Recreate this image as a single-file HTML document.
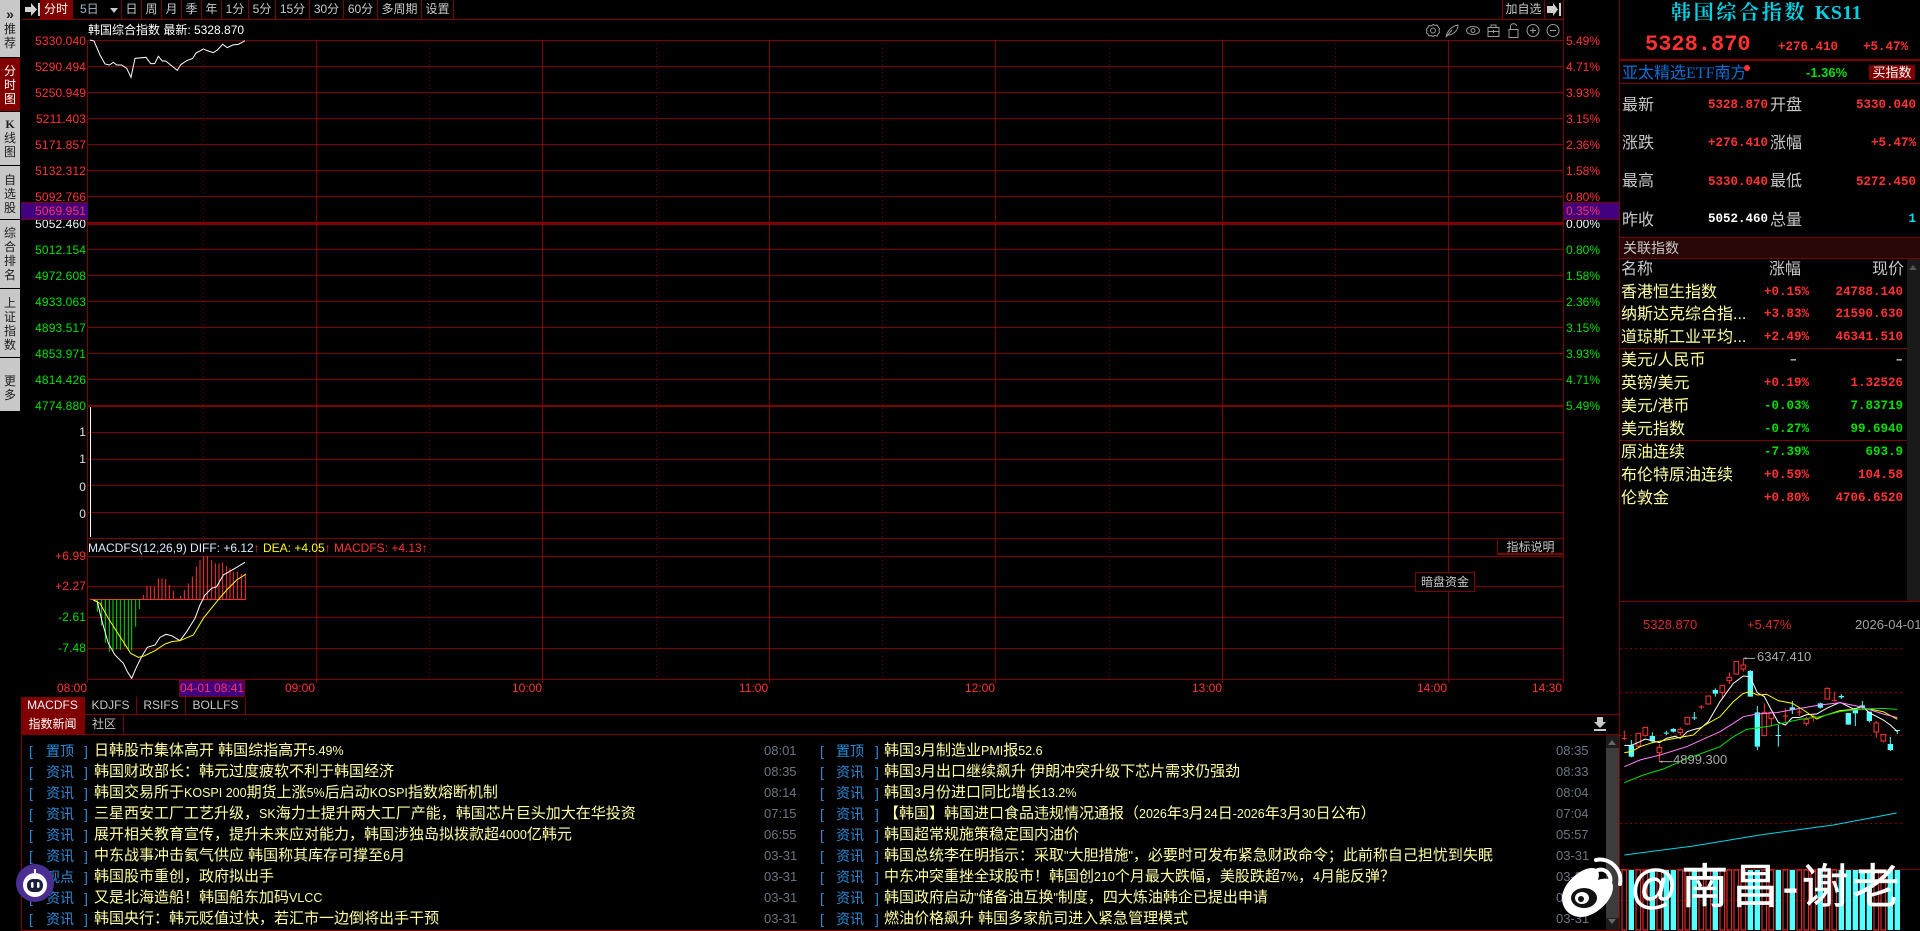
<!DOCTYPE html>
<html lang="zh"><head><meta charset="utf-8"><title>韩国综合指数</title>
<style>
*{margin:0;padding:0;box-sizing:border-box}
html,body{width:1920px;height:931px;background:#000;overflow:hidden}
body{position:relative;font-family:"Liberation Sans","WenQuanYi Zen Hei","Noto Sans CJK SC",sans-serif;font-size:12px;color:#c8c8c8}
.t{position:absolute;white-space:nowrap;line-height:16px;height:16px}
.ra{text-align:right}
.c{text-align:center}
svg{position:absolute;left:0;top:0}
.r{color:#ff3232}.g{color:#00e000}.w{color:#f0f8ff}.y{color:#ffff00}
.sb{position:absolute;left:0;width:20px;background:#c8c8c8;color:#202020;font-size:12px;line-height:14px;text-align:center}
.bx{position:absolute;top:0;height:19px;line-height:19px;text-align:center;border-right:1px solid #800000;color:#c8c8c8;font-size:12px}
.ax{position:absolute;left:20px;width:66px;text-align:right;line-height:14px;height:14px;font-size:12px;letter-spacing:.1px}
.ap{position:absolute;left:1566px;line-height:14px;height:14px;font-size:12px}
.m{font-family:"Liberation Mono","WenQuanYi Zen Hei",monospace;font-weight:bold}
.lb{position:absolute;font-size:16px;color:#c8c8c8;line-height:20px;height:20px;white-space:nowrap}
.vl{position:absolute;font-family:"Liberation Mono",monospace;font-weight:bold;font-size:12.5px;line-height:16px;height:16px;text-align:right;white-space:nowrap}
.tn{position:absolute;left:1621px;font-size:16px;color:#ffffa0;line-height:20px;height:20px;white-space:nowrap}
.news{position:absolute;left:0;top:741px;width:1600px}
.row{position:relative;height:21px;font-size:15px;line-height:20px;color:#ffffa0;white-space:nowrap}
.row span{position:absolute;top:0}
.row i{font-style:normal;font-size:12.5px}
.b{color:#2a8ad8;font-size:14px}
.tm{color:#687684;font-size:13px}
</style></head><body>

<svg width="1920" height="931" viewBox="0 0 1920 931" fill="none">
<!-- grid -->
<g stroke="#800000" stroke-width="1" shape-rendering="crispEdges">
<path d="M22 19.5H1563.5M87.5 40.5H1563.5M87.5 66.5H1563.5M87.5 92.5H1563.5M87.5 118.5H1563.5M87.5 144.5H1563.5M87.5 170.5H1563.5M87.5 196.5H1563.5M87.5 249.5H1563.5M87.5 275.5H1563.5M87.5 301.5H1563.5M87.5 327.5H1563.5M87.5 353.5H1563.5M87.5 379.5H1563.5M87.5 432.5H1563.5M87.5 459.5H1563.5M87.5 485.5H1563.5M87.5 512.5H1563.5M87.5 538.5H1563.5M87.5 556.5H1563.5M87.5 586.5H1563.5M87.5 617.5H1563.5M87.5 648.5H1563.5M87.5 679.5H1563.5M21 714.5H1619M21 734.5H1619M21 930.5H1620"/>
<path d="M87.5 40V683M316.5 40V683M542.5 40V683M769.5 40V683M995.5 40V683M1222.5 40V683M1448.5 40V683M1563.5 0V683M1619.5 0V931M21.5 697V931"/>
<path d="M1620 59.5H1920M1620 60.5H1920M1620 83.5H1920M1620 237.5H1920M1620 258.5H1920M1620 348.5H1907M1620 440.5H1907M1620 601.5H1920M1620 869.5H1920"/>
<path stroke-width="3" d="M87 223.5H1563"/>
<path stroke-width="2" d="M87 406H1563"/>
<path stroke-dasharray="1 3" d="M203.5 40V679M429.5 40V679M656.5 40V679M882.5 40V679M1109.5 40V679M1335.5 40V679"/>
<path stroke-dasharray="2 3" d="M1620 648.5H1905M1620 692.5H1905M1620 735.5H1905M1620 779.5H1905M1620 823.5H1905M1620 900.5H1905"/>
</g>
<!-- right table header bg -->
<rect x="1620" y="238" width="300" height="20" fill="#280606"/>
<rect x="1907" y="259" width="13" height="342" fill="#1a1a1a"/>
<path d="M1909 270l4-5 4 5z" fill="#555"/>
<!-- news scrollbar -->
<rect x="1606" y="735" width="13" height="195" fill="#1c1c1c"/>
<rect x="1606" y="748" width="13" height="170" fill="#3c3c3c"/>
<path d="M1608 745l4-5 4 5zM1608 919l4 5 4-5z" fill="#666"/>
<!-- download icon -->
<path d="M1597 717h6v5h3l-6 6-6-6h3zM1594 729h12v2h-12z" fill="#c8c8c8"/>
<!-- main line -->
<g transform="translate(70,15) scale(.33333)">
<polyline stroke="#fff" stroke-width="3" points="60,75 72,78 90,120 105,147 118,150 130,142 140,150 155,150 170,160 183,187 195,130 228,127 242,146 254,146 265,124 277,138 287,138 322,166 332,149 350,137 368,130 378,114 400,102 415,108 430,113 442,105 458,88 472,98 488,90 505,88 525,77"/>
</g>
<rect x="90" y="407" width="1" height="130" fill="#fff"/>
<!-- macd -->
<g transform="translate(0,530) scale(.33333)" stroke-width="3">
<path stroke="#ff3232" d="M270 208.500H738M430 208V195M441 208V168M452 208V168M463 208V170M475 208V145M486 208V145M497 208V147M508 208V165M520 208V183M531 208V205M542 208V198M553 208V180M565 208V160M577 208V140M589 208V110M600 208V90M611 208V78M622 208V78M635 208V90M646 208V100M657 208V100M668 208V97M680 208V108M690 208V115M700 208V125M712 208V125M724 208V132M736 208V130"/>
<path stroke="#00e000" d="M292 208V245M305 208V287M316 208V338M328 208V365M339 208V362M350 208V358M361 208V360M373 208V350M385 208V362M395 208V362M407 208V290M418 208V237"/>
<polyline stroke="#fff" points="280,210 292,215 305,270 325,340 345,375 370,400 382,425 395,445 410,410 425,380 442,352 465,345 480,322 498,313 515,317 540,332 560,305 585,265 600,225 615,195 635,175 650,170 670,135 700,118 735,97"/>
<polyline stroke="#ffff00" points="280,210 300,220 325,265 360,320 392,370 415,382 432,378 465,362 495,342 515,335 540,332 580,315 610,265 650,215 680,180 710,150 737,133"/>
</g>
<!-- mini k -->
<g transform="translate(1620,640) scale(.33333)" stroke-width="3">
<polyline stroke="#00d8e8" points="13,645 220,618 420,585 640,555 830,519"/>
<!-- wicks & bodies -->
<g fill="#55ffff" stroke="#55ffff">
<path fill="none" d="M34 300V352M97 277V310M139 272V285M160 264V278M223 216V240M286 145V170M391 90V170M412 198V330M475 255V320M517 183V222M601 188V206M664 162V177M706 207V258M727 183V205M748 215V247M811 291V333M832 270V282"/>
<path stroke="none" d="M26 316h16v34h-16zM89 288h16v16h-16zM131 278h16v3h-16zM152 267h16v8h-16zM215 232h16v3h-16zM278 150h16v11h-16zM383 93h16v77h-16zM404 217h16v103h-16zM467 285h16v3h-16zM509 202h16v8h-16zM593 190h16v13h-16zM656 168h16v4h-16zM677 219h16v35h-16zM698 207h16v13h-16zM719 196h16v7h-16zM740 215h16v28h-16zM803 312h16v18h-16zM824 270h16v3h-16z"/>
</g>
<g stroke="#ff3232" fill="none">
<path d="M13 272V300M6 295H20M55 318V322M76 286V290M118 312V322M118 338V365M181 262V268M181 278V285M202 252V255M244 195V208M236 201H252M307 158V178M328 97V112M328 122V132M349 102V104M370 55V75M370 87V95M433 190V217M454 235V260M496 205V245M488 228H504M538 205V228M530 216H546M559 230V238M559 250V258M580 225V245M572 229H588M622 142V145M643 155V185M635 181H651M769 243V249M769 276V293M790 303V308"/>
<path d="M48 280h14v38h-14zM69 262h14v24h-14zM111 322h14v16h-14zM174 268h14v10h-14zM195 232h14v20h-14zM258 168h14v24h-14zM300 136h14v22h-14zM321 112h14v10h-14zM342 64h14v38h-14zM363 75h14v12h-14zM426 217h14v70h-14zM447 217h14v18h-14zM552 238h14v12h-14zM615 145h14v32h-14zM762 249h14v27h-14zM783 283h14v20h-14z"/>
</g>
<!-- MA -->
<polyline stroke="#fff" points="13,316 34,316 60,305 76,297 97,302 118,308 139,295 165,289 181,295 202,275 223,268 244,263 265,245 300,185 340,130 370,108 390,110 412,158 433,170 454,210 475,247 496,255 517,233 540,232 560,224 590,222 620,205 660,187 700,207 727,200 748,218 790,240 811,255 832,275"/>
<polyline stroke="#ffff00" points="13,338 34,335 60,320 97,308 160,296 220,285 250,258 300,230 340,185 370,160 391,155 412,165 440,163 475,182 517,190 550,210 590,237 610,228 660,212 700,208 748,207 790,215 832,238"/>
<polyline stroke="#ff80ff" points="13,380 60,360 120,345 200,320 300,275 340,250 370,230 412,222 470,218 540,205 600,195 660,188 720,200 790,222 832,233"/>
<polyline stroke="#00e000" points="13,428 70,405 130,387 190,360 300,320 340,290 380,268 440,260 540,238 600,230 660,215 720,207 790,205 832,208"/>
<!-- annotation arrows -->
<path stroke="#a8a8a8" d="M370 55H405M118 365H158"/>
<path fill="#a8a8a8" d="M370 55l9-4v8zM118 365l9-4v8z"/>
<!-- volume bars -->
<g fill="#55ffff">
<rect x="26" y="690" width="16" height="180"/><rect x="89" y="690" width="16" height="180"/><rect x="131" y="690" width="16" height="180"/><rect x="152" y="690" width="16" height="180"/><rect x="215" y="690" width="16" height="180"/><rect x="278" y="690" width="16" height="180"/><rect x="383" y="690" width="16" height="180"/><rect x="404" y="690" width="16" height="180"/><rect x="467" y="690" width="16" height="180"/><rect x="509" y="690" width="16" height="180"/><rect x="593" y="690" width="16" height="180"/><rect x="656" y="690" width="16" height="180"/><rect x="677" y="690" width="16" height="180"/><rect x="698" y="690" width="16" height="180"/><rect x="719" y="690" width="16" height="180"/><rect x="740" y="690" width="16" height="180"/><rect x="803" y="690" width="16" height="180"/><rect x="824" y="690" width="16" height="180"/>
</g>
<path stroke="#ff3232" d="M6 690h14v180h-14zM48 690h14v180h-14zM69 690h14v180h-14zM111 690h14v180h-14zM174 690h14v180h-14zM195 690h14v180h-14zM237 690h14v180h-14zM258 690h14v180h-14zM300 690h14v180h-14zM321 690h14v180h-14zM342 690h14v180h-14zM363 690h14v180h-14zM426 690h14v180h-14zM447 690h14v180h-14zM489 690h14v180h-14zM531 690h14v180h-14zM552 690h14v180h-14zM573 690h14v180h-14zM615 690h14v180h-14zM636 690h14v180h-14zM762 690h14v180h-14zM783 690h14v180h-14z"/>
</g>
</svg>

<!-- sidebar -->
<div class="sb" style="top:0;height:57px;padding-top:7px"><b style="font-size:14px;line-height:14px">»</b><br>推<br>荐</div>
<div class="sb" style="top:58px;height:53px;background:#800000;color:#fff;padding-top:6px">分<br>时<br>图</div>
<div class="sb" style="top:112px;height:53px;padding-top:5px"><b style="font-family:'Liberation Serif'">K</b><br>线<br>图</div>
<div class="sb" style="top:166px;height:53px;padding-top:7px">自<br>选<br>股</div>
<div class="sb" style="top:220px;height:68px;padding-top:6px">综<br>合<br>排<br>名</div>
<div class="sb" style="top:289px;height:68px;padding-top:7px">上<br>证<br>指<br>数</div>
<div class="sb" style="top:358px;height:53px;padding-top:16px">更<br>多</div>

<!-- toolbar -->
<svg width="40" height="20" style="left:22px;top:0"><path d="M3 7h6V3l6 6.500-6 6.500v-4H3zM16 3h2v13h-2z" fill="#d0d0d0"/></svg>
<div class="bx" style="left:40px;width:33px;background:#800000;color:#fff">分时</div>
<div class="bx" style="left:73px;width:49px;text-align:left;padding-left:7px;color:#a8b8c8">5日<span style="position:absolute;left:37px;top:8px;border:4px solid transparent;border-top:5px solid #c8c8c8;border-bottom:0"></span></div>
<div class="bx" style="left:122px;width:20px">日</div>
<div class="bx" style="left:142px;width:20px">周</div>
<div class="bx" style="left:162px;width:20px">月</div>
<div class="bx" style="left:182px;width:20px">季</div>
<div class="bx" style="left:202px;width:20px">年</div>
<div class="bx" style="left:222px;width:27px">1分</div>
<div class="bx" style="left:249px;width:27px">5分</div>
<div class="bx" style="left:276px;width:34px">15分</div>
<div class="bx" style="left:310px;width:34px">30分</div>
<div class="bx" style="left:344px;width:34px">60分</div>
<div class="bx" style="left:378px;width:44px">多周期</div>
<div class="bx" style="left:422px;width:32px">设置</div>
<div class="bx" style="left:1502px;width:43px;border-left:1px solid #800000">加自选</div>
<svg width="18" height="19" style="left:1546px;top:0"><path d="M1 6h6V3l5 6.500-5 6.500v-3H1zM13 3h2v13h-2z" fill="#d0d0d0"/></svg>

<div class="t" style="left:88px;top:22px;color:#fff">韩国综合指数 最新: 5328.870</div>

<!-- chart icons -->
<svg width="140" height="20" style="left:1425px;top:21px" fill="none" stroke="#9a9a9a" stroke-width="1">
<circle cx="8" cy="9.500" r="2.500"/><path d="M8 3.500l2 1 2-.5 1 2 1.500 1.500-.5 2 .5 2-1.500 1.500-1 2-2-.5-2 1-2-1-2 .5-1-2L1.500 12l.5-2-.5-2L3 6.500l1-2 2 .5z"/>
<path d="M21 16c1-6 6-11 12-12 0 6-5 10-10 10M21 16l6-7"/>
<ellipse cx="48" cy="9.500" rx="6.500" ry="4"/><circle cx="48" cy="9.500" r="2"/>
<rect x="63" y="6.500" width="11" height="9"/><path d="M66 6.500V4h5v2.500M63 10.500h11M68.500 9v3"/>
<rect x="84" y="8.500" width="9" height="8"/><path d="M85.500 8.500V5c0-3 6-3 6 0"/>
<circle cx="108" cy="9.500" r="6"/><path d="M105 9.500h6M108 6.500v6"/>
<circle cx="128" cy="9.500" r="6"/><path d="M125 9.500h6"/>
</svg>

<!-- left axis -->
<div class="ax r" style="top:34px">5330.040</div>
<div class="ax r" style="top:60px">5290.494</div>
<div class="ax r" style="top:86px">5250.949</div>
<div class="ax r" style="top:112px">5211.403</div>
<div class="ax r" style="top:138px">5171.857</div>
<div class="ax r" style="top:164px">5132.312</div>
<div class="ax r" style="top:190px">5092.766</div>
<div class="ax w" style="top:217px">5052.460</div>
<div style="position:absolute;left:21px;top:202px;width:67px;height:18px;background:#40007f;border-top:1px solid #800000;border-bottom:1px solid #800000"></div>
<div class="ax" style="top:204px;color:#ff3060">5069.951</div>
<div class="ax g" style="top:243px">5012.154</div>
<div class="ax g" style="top:269px">4972.608</div>
<div class="ax g" style="top:295px">4933.063</div>
<div class="ax g" style="top:321px">4893.517</div>
<div class="ax g" style="top:347px">4853.971</div>
<div class="ax g" style="top:373px">4814.426</div>
<div class="ax g" style="top:399px">4774.880</div>
<div class="ax" style="top:425px;color:#e0e0e0">1</div>
<div class="ax" style="top:452px;color:#e0e0e0">1</div>
<div class="ax" style="top:480px;color:#e0e0e0">0</div>
<div class="ax" style="top:507px;color:#e0e0e0">0</div>

<!-- right axis -->
<div class="ap r" style="top:34px">5.49%</div>
<div class="ap r" style="top:60px">4.71%</div>
<div class="ap r" style="top:86px">3.93%</div>
<div class="ap r" style="top:112px">3.15%</div>
<div class="ap r" style="top:138px">2.36%</div>
<div class="ap r" style="top:164px">1.58%</div>
<div class="ap r" style="top:190px">0.80%</div>
<div class="ap w" style="top:217px">0.00%</div>
<div style="position:absolute;left:1564px;top:202px;width:55px;height:18px;background:#40007f;border-top:1px solid #800000;border-bottom:1px solid #800000"></div>
<div class="ap" style="top:204px;color:#ff3060">0.35%</div>
<div class="ap g" style="top:243px">0.80%</div>
<div class="ap g" style="top:269px">1.58%</div>
<div class="ap g" style="top:295px">2.36%</div>
<div class="ap g" style="top:321px">3.15%</div>
<div class="ap g" style="top:347px">3.93%</div>
<div class="ap g" style="top:373px">4.71%</div>
<div class="ap g" style="top:399px">5.49%</div>

<!-- macd labels -->
<div class="t" style="left:88px;top:540px;color:#dcecff">MACDFS(12,26,9) DIFF: +6.12<span class="r">↑</span></div>
<div class="t y" style="left:263px;top:540px">DEA: +4.05<span class="r">↑</span></div>
<div class="t r" style="left:334px;top:540px">MACDFS: +4.13<span>↑</span></div>
<div class="ax r" style="top:549px">+6.99</div>
<div class="ax r" style="top:579px">+2.27</div>
<div class="ax g" style="top:610px">-2.61</div>
<div class="ax g" style="top:641px">-7.48</div>
<div class="t c" style="left:1497px;top:540px;width:66px;height:15px;border-left:1px solid #800000;border-bottom:2px solid #800000;line-height:14px">指标说明</div>
<div class="t c" style="left:1415px;top:572px;width:60px;height:20px;background:#000;border:1px solid #800000;line-height:18px">暗盘资金</div>

<!-- time axis -->
<div class="t r" style="left:57px;top:680px">08:00</div>
<div class="t r" style="left:285px;top:680px">09:00</div>
<div class="t r" style="left:512px;top:680px">10:00</div>
<div class="t r" style="left:739px;top:680px">11:00</div>
<div class="t r" style="left:965px;top:680px">12:00</div>
<div class="t r" style="left:1192px;top:680px">13:00</div>
<div class="t r" style="left:1417px;top:680px">14:00</div>
<div class="t r" style="left:1532px;top:680px">14:30</div>
<div class="t c" style="left:179px;top:680px;width:66px;height:17px;background:#40007f;color:#ff3060;border:1px solid #800000;line-height:15px">04-01 08:41</div>

<!-- tabs -->
<div class="bx" style="left:21px;top:697px;width:64px;height:17px;line-height:17px;background:#800000;color:#f0f0ff">MACDFS</div>
<div class="bx" style="left:85px;top:697px;width:52px;height:17px;line-height:17px">KDJFS</div>
<div class="bx" style="left:137px;top:697px;width:49px;height:17px;line-height:17px">RSIFS</div>
<div class="bx" style="left:186px;top:697px;width:60px;height:17px;line-height:17px">BOLLFS</div>
<div class="bx" style="left:21px;top:715px;width:64px;height:19px;background:#800000;color:#fff">指数新闻</div>
<div class="bx" style="left:85px;top:715px;width:39px;height:19px">社区</div>

<!-- news -->
<div class="news">
<div class="row"><span class="b" style="left:29px">[</span><span class="b" style="left:46px">置顶</span><span class="b" style="left:84px">]</span><span style="left:94px">日韩股市集体高开 韩国综指高开<i>5.49%</i></span><span class="tm" style="left:764px">08:01</span><span class="b" style="left:820px">[</span><span class="b" style="left:836px">置顶</span><span class="b" style="left:875px">]</span><span style="left:884px">韩国<i>3</i>月制造业<i>PMI</i>报<i>52.6</i></span><span class="tm" style="left:1556px">08:35</span></div>
<div class="row"><span class="b" style="left:29px">[</span><span class="b" style="left:46px">资讯</span><span class="b" style="left:84px">]</span><span style="left:94px">韩国财政部长：韩元过度疲软不利于韩国经济</span><span class="tm" style="left:764px">08:35</span><span class="b" style="left:820px">[</span><span class="b" style="left:836px">资讯</span><span class="b" style="left:875px">]</span><span style="left:884px">韩国<i>3</i>月出口继续飙升 伊朗冲突升级下芯片需求仍强劲</span><span class="tm" style="left:1556px">08:33</span></div>
<div class="row"><span class="b" style="left:29px">[</span><span class="b" style="left:46px">资讯</span><span class="b" style="left:84px">]</span><span style="left:94px">韩国交易所于<i>KOSPI 200</i>期货上涨<i>5%</i>后启动<i>KOSPI</i>指数熔断机制</span><span class="tm" style="left:764px">08:14</span><span class="b" style="left:820px">[</span><span class="b" style="left:836px">资讯</span><span class="b" style="left:875px">]</span><span style="left:884px">韩国<i>3</i>月份进口同比增长<i>13.2%</i></span><span class="tm" style="left:1556px">08:04</span></div>
<div class="row"><span class="b" style="left:29px">[</span><span class="b" style="left:46px">资讯</span><span class="b" style="left:84px">]</span><span style="left:94px">三星西安工厂工艺升级，<i>SK</i>海力士提升两大工厂产能，韩国芯片巨头加大在华投资</span><span class="tm" style="left:764px">07:15</span><span class="b" style="left:820px">[</span><span class="b" style="left:836px">资讯</span><span class="b" style="left:875px">]</span><span style="left:884px">【韩国】韩国进口食品违规情况通报（<i>2026</i>年<i>3</i>月<i>24</i>日<i>-2026</i>年<i>3</i>月<i>30</i>日公布）</span><span class="tm" style="left:1556px">07:04</span></div>
<div class="row"><span class="b" style="left:29px">[</span><span class="b" style="left:46px">资讯</span><span class="b" style="left:84px">]</span><span style="left:94px">展开相关教育宣传，提升未来应对能力，韩国涉独岛拟拨款超<i>4000</i>亿韩元</span><span class="tm" style="left:764px">06:55</span><span class="b" style="left:820px">[</span><span class="b" style="left:836px">资讯</span><span class="b" style="left:875px">]</span><span style="left:884px">韩国超常规施策稳定国内油价</span><span class="tm" style="left:1556px">05:57</span></div>
<div class="row"><span class="b" style="left:29px">[</span><span class="b" style="left:46px">资讯</span><span class="b" style="left:84px">]</span><span style="left:94px">中东战事冲击氦气供应 韩国称其库存可撑至<i>6</i>月</span><span class="tm" style="left:764px">03-31</span><span class="b" style="left:820px">[</span><span class="b" style="left:836px">资讯</span><span class="b" style="left:875px">]</span><span style="left:884px">韩国总统李在明指示：采取<i>"</i>大胆措施<i>"</i>，必要时可发布紧急财政命令；此前称自己担忧到失眠</span><span class="tm" style="left:1556px">03-31</span></div>
<div class="row"><span class="b" style="left:29px">[</span><span class="b" style="left:46px">观点</span><span class="b" style="left:84px">]</span><span style="left:94px">韩国股市重创，政府拟出手</span><span class="tm" style="left:764px">03-31</span><span class="b" style="left:820px">[</span><span class="b" style="left:836px">资讯</span><span class="b" style="left:875px">]</span><span style="left:884px">中东冲突重挫全球股市！韩国创<i>210</i>个月最大跌幅，美股跌超<i>7%</i>，<i>4</i>月能反弹？</span><span class="tm" style="left:1556px">03-31</span></div>
<div class="row"><span class="b" style="left:29px">[</span><span class="b" style="left:46px">资讯</span><span class="b" style="left:84px">]</span><span style="left:94px">又是北海造船！韩国船东加码<i>VLCC</i></span><span class="tm" style="left:764px">03-31</span><span class="b" style="left:820px">[</span><span class="b" style="left:836px">资讯</span><span class="b" style="left:875px">]</span><span style="left:884px">韩国政府启动<i>"</i>储备油互换<i>"</i>制度，四大炼油韩企已提出申请</span><span class="tm" style="left:1556px">03-31</span></div>
<div class="row"><span class="b" style="left:29px">[</span><span class="b" style="left:46px">资讯</span><span class="b" style="left:84px">]</span><span style="left:94px">韩国央行：韩元贬值过快，若汇市一边倒将出手干预</span><span class="tm" style="left:764px">03-31</span><span class="b" style="left:820px">[</span><span class="b" style="left:836px">资讯</span><span class="b" style="left:875px">]</span><span style="left:884px">燃油价格飙升 韩国多家航司进入紧急管理模式</span><span class="tm" style="left:1556px">03-31</span></div>
</div>

<!-- right panel -->
<div style="position:absolute;left:1671px;top:1px;height:25px;line-height:25px;color:#00d0e4;font-size:20px;font-weight:bold;letter-spacing:2.7px;white-space:nowrap;font-family:'Liberation Serif','Noto Serif CJK SC',serif">韩国综合指数 <span style="letter-spacing:.4px">KS11</span></div>
<div class="m" style="position:absolute;left:1645px;top:32px;font-size:22px;line-height:26px;color:#ff3232;white-space:nowrap">5328.870</div>
<div class="vl" style="left:1770px;top:39px;width:68px;color:#ff3232">+276.410</div>
<div class="vl" style="left:1850px;top:39px;width:58px;color:#ff3232">+5.47%</div>
<div style="position:absolute;left:1622px;top:64px;font-size:16px;line-height:20px;color:#0a70d8;white-space:nowrap">亚太精选<span style="font-family:'Liberation Serif'">ETF</span>南方</div>
<div style="position:absolute;left:1744px;top:65px;width:6px;height:6px;border-radius:3px;background:#ff3232"></div>
<div class="t g" style="left:1806px;top:65px;font-size:13px;font-weight:bold">-1.36%</div>
<div style="position:absolute;left:1869px;top:65px;width:46px;height:15px;background:#800000;border-radius:2px;color:#fff;text-align:center;line-height:15px;font-size:13px">买指数</div>

<div class="lb" style="left:1622px;top:96px">最新</div>
<div class="vl r" style="left:1680px;top:97px;width:88px">5328.870</div>
<div class="lb" style="left:1770px;top:96px">开盘</div>
<div class="vl r" style="left:1830px;top:97px;width:86px">5330.040</div>
<div class="lb" style="left:1622px;top:134px">涨跌</div>
<div class="vl r" style="left:1680px;top:135px;width:88px">+276.410</div>
<div class="lb" style="left:1770px;top:134px">涨幅</div>
<div class="vl r" style="left:1830px;top:135px;width:86px">+5.47%</div>
<div class="lb" style="left:1622px;top:172px">最高</div>
<div class="vl r" style="left:1680px;top:174px;width:88px">5330.040</div>
<div class="lb" style="left:1770px;top:172px">最低</div>
<div class="vl r" style="left:1830px;top:174px;width:86px">5272.450</div>
<div class="lb" style="left:1622px;top:211px">昨收</div>
<div class="vl" style="left:1680px;top:211px;width:88px;color:#fff">5052.460</div>
<div class="lb" style="left:1770px;top:211px">总量</div>
<div class="vl" style="left:1830px;top:211px;width:86px;color:#00e0f0">1</div>

<div class="t" style="left:1623px;top:240px;font-size:14px">关联指数</div>

<div class="lb" style="left:1621px;top:260px">名称</div>
<div class="lb" style="left:1769px;top:260px">涨幅</div>
<div class="lb" style="left:1872px;top:260px">现价</div>

<div class="tn" style="top:283px">香港恒生指数</div>
<div class="vl r" style="left:1750px;top:284px;width:59px">+0.15%</div>
<div class="vl r" style="left:1820px;top:284px;width:83px">24788.140</div>
<div class="tn" style="top:305px">纳斯达克综合指...</div>
<div class="vl r" style="left:1750px;top:306px;width:59px">+3.83%</div>
<div class="vl r" style="left:1820px;top:306px;width:83px">21590.630</div>
<div class="tn" style="top:328px">道琼斯工业平均...</div>
<div class="vl r" style="left:1750px;top:329px;width:59px">+2.49%</div>
<div class="vl r" style="left:1820px;top:329px;width:83px">46341.510</div>
<div class="tn" style="top:351px">美元/人民币</div>
<div class="vl" style="left:1750px;top:352px;width:59px;color:#c8c8c8;padding-right:12px">–</div>
<div class="vl" style="left:1820px;top:352px;width:83px;color:#c8c8c8">–</div>
<div class="tn" style="top:374px">英镑/美元</div>
<div class="vl r" style="left:1750px;top:375px;width:59px">+0.19%</div>
<div class="vl r" style="left:1820px;top:375px;width:83px">1.32526</div>
<div class="tn" style="top:397px">美元/港币</div>
<div class="vl g" style="left:1750px;top:398px;width:59px">-0.03%</div>
<div class="vl g" style="left:1820px;top:398px;width:83px">7.83719</div>
<div class="tn" style="top:420px">美元指数</div>
<div class="vl g" style="left:1750px;top:421px;width:59px">-0.27%</div>
<div class="vl g" style="left:1820px;top:421px;width:83px">99.6940</div>
<div class="tn" style="top:443px">原油连续</div>
<div class="vl g" style="left:1750px;top:444px;width:59px">-7.39%</div>
<div class="vl g" style="left:1820px;top:444px;width:83px">693.9</div>
<div class="tn" style="top:466px">布伦特原油连续</div>
<div class="vl r" style="left:1750px;top:467px;width:59px">+0.59%</div>
<div class="vl r" style="left:1820px;top:467px;width:83px">104.58</div>
<div class="tn" style="top:489px">伦敦金</div>
<div class="vl r" style="left:1750px;top:490px;width:59px">+0.80%</div>
<div class="vl r" style="left:1820px;top:490px;width:83px">4706.6520</div>

<!-- mini k labels -->
<div class="t" style="left:1643px;top:617px;font-size:13px;color:#d82828">5328.870</div>
<div class="t" style="left:1747px;top:617px;font-size:13px;color:#d82828">+5.47%</div>
<div class="t" style="left:1855px;top:617px;font-size:13px;color:#a0a0a0">2026-04-01</div>
<div class="t" style="left:1757px;top:649px;font-size:13px;color:#a8a8a8">6347.410</div>
<div class="t" style="left:1673px;top:752px;font-size:13px;color:#a8a8a8">4899.300</div>

<!-- bot icon -->
<svg width="40" height="40" style="left:15px;top:863px">
<circle cx="20" cy="20" r="19" fill="#4b2e91"/>
<circle cx="20" cy="22" r="12" fill="#fff"/>
<rect x="12" y="16" width="16" height="13" rx="6" fill="#1c1c3c"/>
<rect x="16" y="19" width="2.500" height="6" rx="1.200" fill="#fff"/><rect x="22" y="19" width="2.500" height="6" rx="1.200" fill="#fff"/>
<path d="M20 10v-4" stroke="#fff" stroke-width="2"/>
</svg>

<!-- watermark -->
<svg width="70" height="75" style="left:1560px;top:852px" fill="none">
<path d="M2 46c0-14 18-30 30-30 7 0 8 6 6 12 8-3 15-1 15 7 0 14-18 30-32 30C10 65 2 57 2 46z" fill="#fff"/>
<ellipse cx="24" cy="46" rx="13" ry="10" fill="#111"/>
<ellipse cx="22" cy="46" rx="7" ry="6" fill="#fff"/>
<circle cx="21" cy="47" r="3" fill="#111"/>
<path d="M36 8c14-3 27 10 24 24M38 18c8-2 14 5 12 13" stroke="#fff" stroke-width="4" stroke-linecap="round"/>
</svg>
<div style="position:absolute;left:1630px;top:857px;font-family:'Liberation Sans','Noto Sans CJK SC',sans-serif;font-size:47px;line-height:60px;color:#fff;white-space:nowrap;letter-spacing:3.6px;-webkit-text-stroke:.5px #fff">@南昌-谢老</div>
</body></html>
